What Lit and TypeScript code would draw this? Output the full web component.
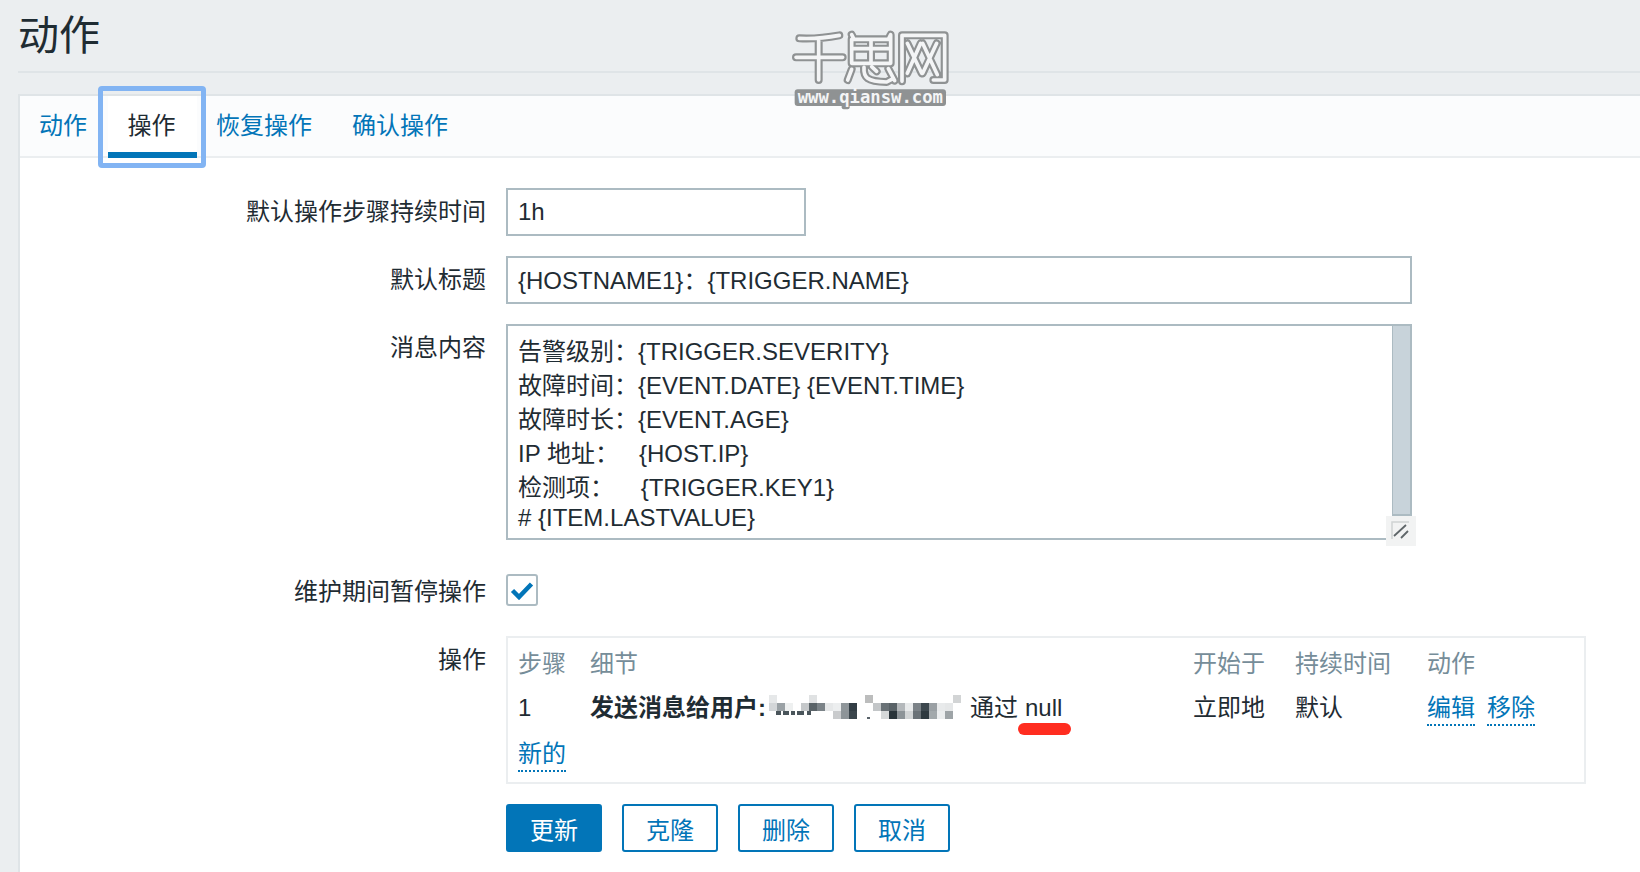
import { LitElement, html, css, svg } from "lit";
import { customElement } from "lit/decorators.js";

type Block = [number, number, string];

/* Pixelated (mosaic) redaction: column, row, colour on an 8px grid. */
const BLUR: Block[] = [
  [0, 0, "#e6e8e9"], [5, 0, "#e0e2e3"], [12, 0, "#bcbdbd"], [23, 0, "#d2d4d5"],
  [0, 1, "#d3d6d8"], [1, 1, "#9aa1a5"], [2, 1, "#eef0f0"], [4, 1, "#c5c8ca"],
  [5, 1, "#5a6368"], [6, 1, "#7b8388"], [7, 1, "#e6e8e9"], [8, 1, "#eceeef"],
  [9, 1, "#8f969a"], [10, 1, "#333e45"], [13, 1, "#c3c6c8"], [14, 1, "#6a7277"],
  [15, 1, "#596267"], [16, 1, "#b4b8bb"], [17, 1, "#e8eaeb"], [18, 1, "#7b8287"],
  [19, 1, "#3c474e"], [20, 1, "#9aa0a4"], [21, 1, "#e8eaeb"], [22, 1, "#e5e7e8"],
  [8, 2, "#c9cbcd"], [9, 2, "#8d9498"], [10, 2, "#3b464c"], [14, 2, "#d5d8d9"],
  [15, 2, "#29343a"], [16, 2, "#8d9498"], [17, 2, "#d2d5d6"], [18, 2, "#6a7277"],
  [19, 2, "#2e393f"], [20, 2, "#a3a9ac"], [21, 2, "#eceeef"], [22, 2, "#9ea4a7"],
];

/* Remains of the text under the mosaic: left, width. */
const FRAGMENTS: [number, number][] = [[10, 5], [17, 6], [25, 4], [31, 7], [41, 4]];

const COLON = "\uFF1A";
const COLUMNS = ["步骤", "细节", "开始于", "持续时间", "动作"];
const BUTTONS = ["克隆", "删除", "取消"];

const WATERMARK_STROKES = svg`
  <path d="M298 115C340 117 385 112 418 106M288 172H428M356 122V240"/>
  <path d="M455 104L462 118H565L572 104V190H455V118M455 146H572M513 118V190"/>
  <path d="M455 208L443 240M492 202C490 232 500 244 560 246L575 238M515 200L530 214M565 206L584 242"/>
  <path d="M606 106H734V240H700M606 106V244M622 130L665 220M662 130L622 220M668 130L712 224M710 130L668 220"/>
`;

@customElement("app-root")
export class AppRoot extends LitElement {
  static styles = css`
    :host {
      display: block;
      width: 1640px;
      height: 872px;
      overflow: hidden;
      position: relative;
      background: #ebeef0;
      color: #1f2c33;
      font-family: "Liberation Sans", "Noto Sans CJK SC", sans-serif;
      font-size: 24px;
    }
    .page { padding-left: 18px; }
    .head {
      height: 71px;
      border-bottom: 2px solid #dfe4e7;
      display: flex;
      align-items: center;
    }
    h1 { margin: 0; font-size: 41px; font-weight: 400; line-height: 68px; }
    .card {
      margin-top: 21px;
      background: #fff;
      border-top: 2px solid #dfe4e7;
      border-left: 2px solid #dfe4e7;
      height: 790px;
      box-sizing: border-box;
    }
    .tabs {
      height: 60px;
      background: #fbfcfd;
      border-bottom: 2px solid #ebeef0;
      display: flex;
      align-items: flex-start;
      padding-left: 19px;
    }
    .tab { color: #0275b8; line-height: 60px; height: 60px; }
    .first { margin-right: 21px; }
    .third { margin-right: 40px; }
    .active {
      box-sizing: border-box;
      color: #1f2c33;
      position: relative;
      width: 89px;
      padding-right: 2px;
      text-align: center;
      margin-right: 19px;
      background: #fff;
      height: 62px;
    }
    .active::before {
      content: "";
      position: absolute;
      left: -10px;
      right: -9px;
      top: -10px;
      bottom: -10px;
      border: 5px solid #82b4f3;
      border-radius: 4px;
    }
    .active::after {
      content: "";
      position: absolute;
      left: 0;
      right: 0;
      bottom: 0;
      height: 6px;
      background: #0275b8;
    }
    .form { padding-top: 30px; display: grid; grid-template-columns: 486px 1fr; row-gap: 20px; }
    .lab { text-align: right; padding-right: 20px; line-height: 48px; }
    .field {
      box-sizing: border-box;
      height: 48px;
      border: 2px solid #acbbc2;
      padding: 0 10px;
      line-height: 46px;
      background: #fff;
      width: 906px;
    }
    .short { width: 300px; line-height: 43px; }
    .ta {
      box-sizing: border-box;
      position: relative;
      height: 216px;
      width: 906px;
      border: 2px solid #acbbc2;
      padding: 9px 10px 0;
      line-height: 34px;
    }
    .ta div { white-space: pre; height: 34px; }
    .ta div.last { height: 29px; line-height: 25px; }
    .bar {
      position: absolute;
      right: -2px;
      top: -2px;
      bottom: 22px;
      width: 20px;
      box-sizing: border-box;
      background: #c8d3da;
      border: 2px solid #acbbc2;
      border-left-width: 1px;
    }
    .grip {
      position: absolute;
      right: -6px;
      bottom: -8px;
      width: 30px;
      height: 30px;
      background: #f2f3f3;
      display: flex;
      align-items: center;
      justify-content: center;
    }
    .grip svg { display: block; }
    .chk-row { margin-top: 8px; }
    .chk {
      box-sizing: border-box;
      width: 32px;
      height: 32px;
      margin-top: 6px;
      border: 2px solid #acbbc2;
      border-radius: 3px;
      display: flex;
      align-items: center;
      justify-content: center;
    }
    .ops {
      box-sizing: border-box;
      width: 1080px;
      height: 148px;
      border: 2px solid #ebeef0;
      padding: 5px 10px 0;
      display: grid;
      grid-template-columns: 72px 603px 102px 132px 160px;
      grid-auto-rows: 44px;
      line-height: 42px;
    }
    .th { color: #768d99; }
    .u {
      color: #0275b8;
      border-bottom: 2px dotted #0275b8;
      display: inline-block;
      line-height: 33px;
      height: 33px;
    }
    .acts { display: flex; gap: 12px; padding-top: 4px; }
    .new { grid-column: 1 / -1; padding-top: 6px; line-height: normal; }
    .detail { white-space: nowrap; display: flex; }
    .detail b { font-weight: 700; }
    .blur { position: relative; width: 204px; height: 42px; flex: none; }
    .px { position: absolute; width: 8px; height: 8px; }
    .frag { position: absolute; top: 24px; height: 4px; background: #4a555b; }
    .tick { position: absolute; left: 101px; top: 30px; width: 3px; height: 2px; background: #59636a; }
    .null { position: relative; margin-left: 7px; }
    .red {
      position: absolute;
      left: -7px;
      top: 36px;
      width: 53px;
      height: 12px;
      border-radius: 6px;
      background: #ff2d20;
    }
    .btns { display: flex; gap: 20px; grid-column: 2; }
    .btn {
      box-sizing: border-box;
      width: 96px;
      height: 48px;
      border: 2px solid #0275b8;
      border-radius: 3px;
      color: #0275b8;
      display: flex;
      align-items: center;
      justify-content: center;
      background: #fff;
    }
    .primary { background: #0275b8; color: #fff; }
    .wm { position: absolute; left: 700px; top: 0; pointer-events: none; }
    .wm-label {
      font-family: "DejaVu Sans Mono", monospace;
      font-weight: 700;
      font-size: 54px;
      fill: #f4f5f6;
    }
  `;

  render() {
    return html`
      <div class="page">
        <div class="head"><h1>动作</h1></div>
        <div class="card">
          <div class="tabs">
            <div class="tab first">动作</div>
            <div class="tab active">操作</div>
            <div class="tab third">恢复操作</div>
            <div class="tab">确认操作</div>
          </div>
          <div class="form">
            <div class="lab">默认操作步骤持续时间</div>
            <div class="field short">1h</div>
            <div class="lab">默认标题</div>
            <div class="field">{HOSTNAME1}${COLON}{TRIGGER.NAME}</div>
            <div class="lab">消息内容</div>
            <div class="ta">
              <div>告警级别${COLON}{TRIGGER.SEVERITY}</div>
              <div>故障时间${COLON}{EVENT.DATE} {EVENT.TIME}</div>
              <div>故障时长${COLON}{EVENT.AGE}</div>
              <div>IP 地址${COLON}${"   "}{HOST.IP}</div>
              <div>检测项${COLON}${"    "}{TRIGGER.KEY1}</div>
              <div class="last"># {ITEM.LASTVALUE}</div>
              <span class="bar"></span>
              <span class="grip">
                <svg width="20" height="20" viewBox="0 0 20 20">
                  <path d="M1 18V1H18" fill="none" stroke="#d0d3d4" stroke-width="1.5"/>
                  <path d="M3 15L15 4M10 17L17 10" stroke="#5f6669" stroke-width="1.8" fill="none"/>
                </svg>
              </span>
            </div>
            <div class="lab chk-row">维护期间暂停操作</div>
            <div class="chk-row">
              <div class="chk">
                <svg width="24" height="19" viewBox="0 0 24 19">
                  <path d="M2.5 9.5L9 16L21.5 3" fill="none" stroke="#0275b8" stroke-width="4.5"/>
                </svg>
              </div>
            </div>
            <div class="lab">操作</div>
            <div class="ops">
              ${COLUMNS.map((c) => html`<div class="th">${c}</div>`)}
              <div>1</div>
              <div class="detail">
                <b>发送消息给用户:</b>
                <span class="blur">
                  ${FRAGMENTS.map(
                    ([left, width]) => html`<i class="frag" style="left:${left}px;width:${width}px"></i>`
                  )}
                  <i class="tick"></i>
                  ${BLUR.map(
                    ([col, row, c]) =>
                      html`<i class="px" style="left:${3 + col * 8}px;top:${8 + row * 8}px;background:${c}"></i>`
                  )}
                </span>
                <span>通过</span>
                <span class="null">null<i class="red"></i></span>
              </div>
              <div>立即地</div>
              <div>默认</div>
              <div class="acts"><span class="u">编辑</span><span class="u">移除</span></div>
              <div class="new"><span class="u">新的</span></div>
            </div>
            <div class="btns">
              <div class="btn primary">更新</div>
              ${BUTTONS.map((b) => html`<div class="btn">${b}</div>`)}
            </div>
          </div>
        </div>
      </div>
      <svg class="wm" width="300" height="130" viewBox="0 0 900 390" fill="none">
        <g stroke="#8f9293" stroke-width="24" stroke-linecap="round" stroke-linejoin="round">${WATERMARK_STROKES}</g>
        <g stroke="#f4f5f6" stroke-width="11" stroke-linecap="round" stroke-linejoin="round">${WATERMARK_STROKES}</g>
        <rect x="284" y="268" width="454" height="50" rx="9" fill="#8f9293"/>
        <rect x="425" y="300" width="24" height="28" rx="6" fill="#8f9293"/>
        <text class="wm-label" x="293" y="308" textLength="436" lengthAdjust="spacingAndGlyphs">www.qiansw.com</text>
      </svg>
    `;
  }
}
